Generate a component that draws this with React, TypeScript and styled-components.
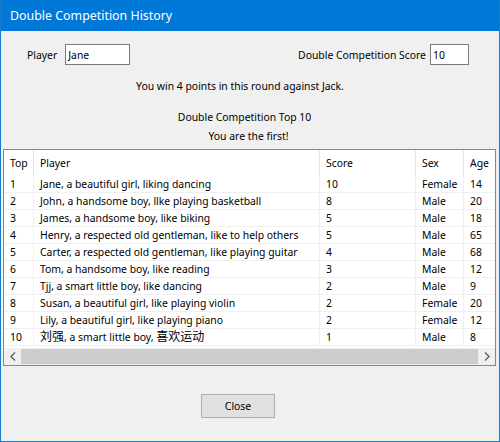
import React from 'react';
import styled, { createGlobalStyle } from 'styled-components';

const GlobalStyle = createGlobalStyle`
  html, body {
    margin: 0;
    padding: 0;
    background: #f0f0f0;
  }
  body {
    font-family: 'Noto Sans', 'Noto Sans CJK SC', sans-serif;
    font-size: 10.4px;
    color: #000;
  }
`;

const Window = styled.div`
  width: 500px;
  height: 442px;
  box-sizing: border-box;
  border: 1px solid #1979ca;
  border-top: 0;
  display: flex;
  flex-direction: column;
  background: #f0f0f0;
`;

const TitleBar = styled.div`
  height: 31px;
  flex-shrink: 0;
  background: #0078d7;
  color: #fff;
  font-size: 12.4px;
  display: flex;
  align-items: center;
  padding-left: 9px;
`;

const TopRow = styled.div`
  display: flex;
  justify-content: space-between;
  align-items: center;
  margin-top: 13px;
  padding: 0 30px 0 26px;
`;

const Field = styled.label<{ $gap: number }>`
  display: flex;
  align-items: center;
  gap: ${p => p.$gap}px;
`;

const TextBox = styled.input<{ $width: number }>`
  width: ${p => p.$width}px;
  height: 21px;
  box-sizing: border-box;
  border: 1px solid #7a7a7a;
  background: #fff;
  font: inherit;
  padding: 0 2px;
  outline: none;
`;

const Caption = styled.div<{ $top: number; $shift: number }>`
  margin-top: ${p => p.$top}px;
  padding-right: ${p => p.$shift}px;
  text-align: center;
  line-height: 17px;
`;

const ListView = styled.div`
  margin: 4px 3px 0 2px;
  height: 217px;
  box-sizing: border-box;
  border: 1px solid #828790;
  background: #fff;
  display: flex;
  flex-direction: column;
`;

const ListBody = styled.div`
  flex: 1;
  overflow: hidden;
`;

const Row = styled.div<{ $header?: boolean }>`
  display: grid;
  grid-template-columns: 30px 286px 96px 48px 40px;
  height: ${p => (p.$header ? 26 : 17)}px;
  box-sizing: border-box;
  border-bottom: ${p => (p.$header ? 0 : '1px solid #f0f0f0')};
  white-space: nowrap;
`;

const Cell = styled.div<{ $header?: boolean }>`
  display: flex;
  align-items: center;
  padding-left: 6px;
  box-sizing: border-box;
  border-right: 1px solid ${p => (p.$header ? '#e5e5e5' : '#f0f0f0')};
`;

const CellText = styled.span`
  white-space: pre;
  line-height: 16px;
`;

const Cjk = styled.span`
  font-family: 'Noto Sans CJK SC', sans-serif;
  font-size: 12px;
  line-height: 1;
`;

const ScrollBar = styled.div`
  height: 17px;
  flex-shrink: 0;
  display: flex;
  background: #f0f0f0;
`;

const ArrowButton = styled.div`
  width: 17px;
  display: flex;
  align-items: center;
  justify-content: center;
`;

const Thumb = styled.div`
  flex: 1;
  margin: 1px 0;
  background: #cdcdcd;
`;

const Footer = styled.div`
  margin-top: 28px;
  padding-left: 200px;
`;

const Button = styled.button`
  width: 74px;
  height: 24px;
  border: 1px solid #adadad;
  background: #e1e1e1;
  font: inherit;
  color: #000;
  padding: 0;
`;

const columns = ['Top', 'Player', 'Score', 'Sex', 'Age'];

const players = [
  ['1', 'Jane, a beautiful girl, liking dancing', '10', 'Female', '14'],
  ['2', 'John, a handsome boy, llke playing basketball', '8', 'Male', '20'],
  ['3', 'James, a handsome boy, like biking', '5', 'Male', '18'],
  ['4', 'Henry, a respected old gentleman, like to help others', '5', 'Male', '65'],
  ['5', 'Carter, a respected old gentleman, like playing guitar', '4', 'Male', '68'],
  ['6', 'Tom, a handsome boy, like reading', '3', 'Male', '12'],
  ['7', 'Tjj, a smart little boy, like dancing', '2', 'Male', '9'],
  ['8', 'Susan, a beautiful girl, like playing violin', '2', 'Female', '20'],
  ['9', 'Lily, a beautiful girl, like playing piano', '2', 'Female', '12'],
  ['10', '刘强, a smart little boy, 喜欢运动', '1', 'Male', '8'],
];

// chinese runs get the bigger CJK face, like the original list does
const renderText = (v: string) =>
  v.split(/([\u4e00-\u9fff]+)/).map((part, i) =>
    /[\u4e00-\u9fff]/.test(part) ? <Cjk key={i}>{part}</Cjk> : part
  );

const Chevron = ({ dir }: { dir: 'left' | 'right' }) => (
  <svg width="6" height="9" viewBox="0 0 6 9">
    <polyline
      points={dir === 'left' ? '5,0.5 1,4.5 5,8.5' : '1,0.5 5,4.5 1,8.5'}
      fill="none"
      stroke="#606060"
      strokeWidth="1.4"
    />
  </svg>
);

export default function App() {
  return (
    <>
      <GlobalStyle />
      <Window>
        <TitleBar>Double Competition History</TitleBar>
        <TopRow>
          <Field $gap={8}>
            Player
            <TextBox $width={65} defaultValue="Jane" />
          </Field>
          <Field $gap={4}>
            Double Competition Score
            <TextBox $width={39} defaultValue="10" />
          </Field>
        </TopRow>
        <Caption $top={13} $shift={20}>You win 4 points in this round against Jack.</Caption>
        <Caption $top={14} $shift={11}>Double Competition Top 10</Caption>
        <Caption $top={2} $shift={3}>You are the first!</Caption>
        <ListView>
          <ListBody>
            <Row $header>
              {columns.map(c => (
                <Cell $header key={c}>{c}</Cell>
              ))}
            </Row>
            {players.map(p => (
              <Row key={p[0]}>
                {p.map((v, i) => (
                  <Cell key={i}>
                    <CellText>{renderText(v)}</CellText>
                  </Cell>
                ))}
              </Row>
            ))}
          </ListBody>
          <ScrollBar>
            <ArrowButton><Chevron dir="left" /></ArrowButton>
            <Thumb />
            <ArrowButton><Chevron dir="right" /></ArrowButton>
          </ScrollBar>
        </ListView>
        <Footer>
          <Button>Close</Button>
        </Footer>
      </Window>
    </>
  );
}
